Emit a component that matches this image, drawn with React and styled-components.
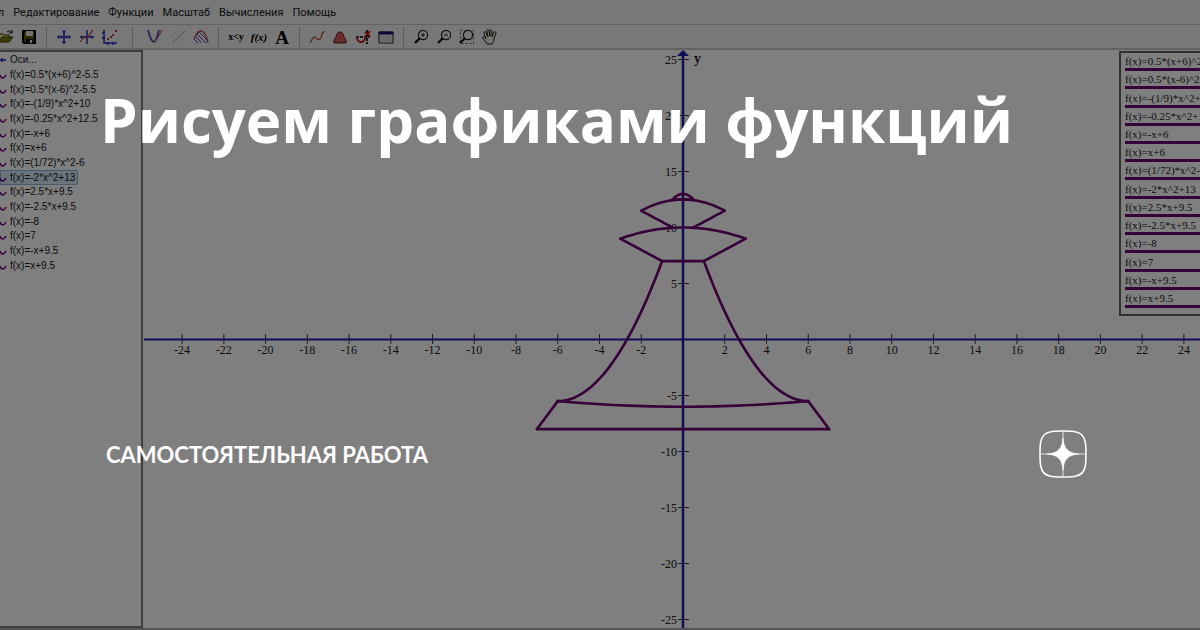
import React from "react";
import styled, { createGlobalStyle } from "styled-components";

const GlobalStyle = createGlobalStyle`
  * {
    box-sizing: border-box;
  }

  body {
    margin: 0;
    background: #808080;
  }
`;

const Cover = styled.main`
  position: relative;
  min-height: 100vh;
  display: flex;
  overflow: hidden;
`;

const AppWindow = styled.div`
  flex: 1;
  min-width: 0;
  display: flex;
  flex-direction: column;
  background: #fff;
  color: #181818;
`;

const MenuBar = styled.nav`
  display: flex;
  gap: 9px;
  height: 24px;
  align-items: center;
  margin-left: -23px;
  background: #f0f0f0;
`;

const MenuItem = styled.button`
  border: 0;
  padding: 0;
  background: none;
  color: #181818;
  font: 11px Roboto, "Noto Sans", sans-serif;
  white-space: nowrap;
`;

const ToolBar = styled.div`
  display: flex;
  align-items: center;
  height: 26px;
  margin-left: -2px;
  padding-top: 1px;
  background: #f0f0f0;
  border-top: 1px solid #c4c4c4;
  border-bottom: 2px solid #c4c4c4;
`;

const ToolGroup = styled.div`
  display: flex;
  gap: 7px;
`;

const Separator = styled.span`
  width: 1px;
  height: 20px;
  margin: 0 ${(p) => (p.$wide ? 14 : 9)}px;
  background: #b8b8b8;
`;

const ToolButton = styled.button`
  width: 16px;
  height: 16px;
  padding: 0;
  border: 0;
  background: none;
  display: flex;

  svg {
    width: 16px;
    height: 16px;
    fill: none;
  }
`;

const Workspace = styled.div`
  flex: 1;
  display: flex;
  min-height: 0;
  border-bottom: 2px solid #a8a8a8;
`;

const Sidebar = styled.aside`
  flex: 0 0 143px;
  border: 2px solid #7c7c7c;
  border-left: 0;
`;

const FunctionList = styled.ul`
  display: grid;
  grid-auto-rows: 1fr;
  height: 221px;
  margin: 0;
  padding: 1px 0 0;
  list-style: none;
`;

const FunctionItem = styled.li`
  display: flex;
  align-items: center;
  justify-self: start;
  gap: 3px;
  padding-right: 3px;
  font: 10px/12px "Liberation Sans", Arial, sans-serif;
  white-space: nowrap;
  border-radius: 0 3px 3px 0;
  background: ${(p) => (p.$selected ? "#d2e8fa" : "none")};
  box-shadow: ${(p) => (p.$selected ? "inset 0 0 0 1px #8ab4d8" : "none")};

  svg {
    width: 7px;
    height: 8px;
    fill: none;
  }
`;

const PlotArea = styled.section`
  flex: 1;
  min-width: 0;
  position: relative;
  display: flex;
`;

const PlotSvg = styled.svg`
  width: 100%;
  height: 578px;
  font: 12px "Liberation Serif", "Times New Roman", serif;
`;

const Legend = styled.ul`
  position: absolute;
  top: 1px;
  right: 0;
  width: 81px;
  display: grid;
  grid-auto-rows: 1fr;
  height: 265px;
  margin: 0;
  padding: 0 0 6px 4px;
  list-style: none;
  overflow: hidden;
  background: #fff;
  border: 2px solid #606060;
  border-right: 0;
`;

const LegendItem = styled.li`
  display: flex;
  align-items: flex-end;
  font: 11px/14px "Liberation Serif", "Times New Roman", serif;
  white-space: nowrap;
  border-bottom: 3px solid #6c0070;
`;

const Shade = styled.div`
  position: absolute;
  inset: 0;
  display: flex;
  flex-direction: column;
  justify-content: space-between;
  padding: 76px 113px 152px 100px;
  background: rgba(0, 0, 0, 0.5);
  color: #fff;
`;

const Title = styled.h1`
  margin: 0;
  font: 700 60px/88px "Open Sans", "Noto Sans", sans-serif;
  white-space: nowrap;
`;

const Footer = styled.footer`
  display: flex;
  align-items: center;
  justify-content: space-between;
  padding-left: 6px;
`;

const Channel = styled.span`
  padding-top: 2px;
  font: 700 22px/32px Lato, "Noto Sans", sans-serif;
  white-space: nowrap;
`;

const LogoSvg = styled.svg`
  width: 48px;
  height: 48px;
`;

const menu = ["Файл", "Редактирование", "Функции", "Масштаб", "Вычисления", "Помощь"];

const functions = [
  "f(x)=0.5*(x+6)^2-5.5",
  "f(x)=0.5*(x-6)^2-5.5",
  "f(x)=-(1/9)*x^2+10",
  "f(x)=-0.25*x^2+12.5",
  "f(x)=-x+6",
  "f(x)=x+6",
  "f(x)=(1/72)*x^2-6",
  "f(x)=-2*x^2+13",
  "f(x)=2.5*x+9.5",
  "f(x)=-2.5*x+9.5",
  "f(x)=-8",
  "f(x)=7",
  "f(x)=-x+9.5",
  "f(x)=x+9.5",
];

const SELECTED = 7;

const icons = {
  open: (
    <>
      <path d="M1 13V5h4l1 1h5v2" stroke="#333300" fill="#e8e070" />
      <path d="M1 13l3-5h11l-4 5z" stroke="#333300" fill="#808000" />
      <path d="M9 3c2-2 4-1 5 1M14 1v3h-3" stroke="#000" />
    </>
  ),
  save: (
    <>
      <path d="M2 2h12v12H3l-1-1z" fill="#555500" stroke="#000" strokeWidth="2" />
      <path d="M5 2h7v5H5z" fill="#e8e8e8" />
      <path d="M5 10h7v4H5z" fill="#111" />
      <path d="M9 11h2v3H9z" fill="#eee" />
    </>
  ),
  axes: (
    <>
      <path d="M1 8h14M8 1v14" stroke="#2828c0" strokeWidth="1.6" />
      <path d="M3 6v4M5.5 6.5v3M10.5 6.5v3M13 6v4M6 3h4M6 13h4" stroke="#2828c0" />
    </>
  ),
  curve: (
    <>
      <path d="M1 8h14M8 1v14" stroke="#2828c0" strokeWidth="1.5" />
      <path d="M3 6.5v3M13 6.5v3" stroke="#2828c0" />
      <path d="M1 13c3-4 4-5 6-4s3-4 7-8" stroke="#b83838" strokeWidth="1.2" />
    </>
  ),
  points: (
    <>
      <path d="M2 1v13h13M0 4h3M0 9h3M6 13v3M11 13v3" stroke="#2828c0" strokeWidth="1.5" />
      <path d="M5 10h2M8 8h2M10 6h2M13 2h2" stroke="#b83838" strokeWidth="2" />
    </>
  ),
  parabola: (
    <>
      <path d="M1 1c2 8 4 12 6 12s3-5 5-12" stroke="#3838b0" strokeWidth="1.6" />
      <path d="M7 13c3-2 5-7 8-12" stroke="#c05068" strokeWidth="1.2" />
    </>
  ),
  tangent: (
    <>
      <path d="M2 14L15 2" stroke="#a0a0a0" />
      <path d="M2 6l5-4M9 13l5-4" stroke="#bcbcbc" strokeDasharray="2 2" />
    </>
  ),
  area: (
    <>
      <path d="M1 10C4 4 5 2 8 2s6 6 7 12" stroke="#b84858" strokeWidth="1.4" />
      <path d="M1 10l4 4M3 8l6 6M4 5l9 9M6 3l9 9" stroke="#4848b0" />
    </>
  ),
  trend: <path d="M1 14c2-3 3-7 5-6s3 4 5 2 1-5 4-8" stroke="#b83838" strokeWidth="1.2" />,
  integral: <path d="M2 14v-3C5 8 4 3 8 3s3 5 6 8v3z" fill="#d85858" stroke="#501818" />,
  rotate: (
    <>
      <path d="M1 8h14M12 1v14" stroke="#000" strokeWidth="1.7" strokeDasharray="3 1" />
      <path d="M2 8c0 6 7 7 8 1M10 8l5-6M10 3l5 4" stroke="#c01818" strokeWidth="1.8" />
    </>
  ),
  table: (
    <>
      <path d="M1 3h14v11H1z" fill="#e8e8e8" stroke="#202020" />
      <path d="M1 3h14v2H1z" fill="#101080" stroke="#181860" />
      <path d="M2 8h12M2 11h12M5 6v8M8 6v8M11 6v8" stroke="#c4c4cc" />
    </>
  ),
  zoomIn: (
    <>
      <circle cx="10" cy="6" r="4.6" stroke="#222" strokeWidth="1.2" />
      <path d="M7 9l-5 5" stroke="#111" strokeWidth="2.4" />
      <path d="M8 6h4M10 4v4" stroke="#111" />
    </>
  ),
  zoomOut: (
    <>
      <circle cx="10" cy="6" r="4.6" stroke="#222" strokeWidth="1.2" />
      <path d="M7 9l-5 5" stroke="#111" strokeWidth="2.4" />
      <path d="M8 6h4" stroke="#111" />
    </>
  ),
  zoomBox: (
    <>
      <path d="M1.5 1.5h13v13h-13z" stroke="#555" strokeDasharray="2 2" />
      <circle cx="9" cy="6" r="4.6" stroke="#222" strokeWidth="1.2" />
      <path d="M6 9l-5 5" stroke="#111" strokeWidth="2.4" />
    </>
  ),
  hand: (
    <path
      d="M5 15c-1-3-5-5-4-7 1-1 2 0 3 2L2 4c0-2 2-2 2 0l2 4-1-6c0-2 2-2 2 0l1 5V2c0-2 2-1 2 0v6l2-5c1-1 2 0 2 1l-2 6c0 2-1 3-2 5z"
      fill="#f4ecd8"
      stroke="#222"
    />
  ),
};

// glyph buttons are lettered rather than drawn
const glyphs = {
  less: { text: "x<y", size: 10, y: 11 },
  fx: { text: "f(x)", size: 11, italic: true, y: 12 },
  text: { text: "A", size: 19, y: 15 },
};

const toolGroups = [
  [["open", "Открыть"], ["save", "Сохранить"]],
  [["axes", "Оси"], ["curve", "График"], ["points", "Точки"]],
  [["parabola", "Функция"], ["tangent", "Касательная"], ["area", "Штриховка"]],
  [["less", "Неравенство"], ["fx", "Выражение"], ["text", "Надпись"]],
  [["trend", "Линия тренда"], ["integral", "Интеграл"], ["rotate", "Вычислить"], ["table", "Таблица"]],
  [["zoomIn", "Увеличить"], ["zoomOut", "Уменьшить"], ["zoomBox", "Область"], ["hand", "Переместить"]],
];

// screen position of a point given in graph units
const ORIGIN = { x: 540, y: 289 };
const px = (x) => ORIGIN.x + x * 20.87;
const py = (y) => ORIGIN.y + 0.5 - y * 11.2;

const curves = [
  [(x) => 0.5 * (x + 6) ** 2 - 5.5, -6, -1],
  [(x) => 0.5 * (x - 6) ** 2 - 5.5, 1, 6],
  [(x) => -(x ** 2) / 9 + 10, -3, 3],
  [(x) => -0.25 * x ** 2 + 12.5, -2, 2],
  [(x) => -x + 6, -3, -1],
  [(x) => x + 6, 1, 3],
  [(x) => x ** 2 / 72 - 6, -6, 6],
  [(x) => -2 * x ** 2 + 13, -0.5, 0.5],
  [(x) => 2.5 * x + 9.5, -7, -6],
  [(x) => -2.5 * x + 9.5, 6, 7],
  [() => -8, -7, 7],
  [() => 7, -1, 1],
  [(x) => -x + 9.5, -2, -0.5],
  [(x) => x + 9.5, 0.5, 2],
  [() => 12.5, -0.5, 0.5],
];

function toPoints([fn, from, to]) {
  const steps = 32;
  return Array.from({ length: steps + 1 }, (_, i) => {
    const x = from + ((to - from) * i) / steps;
    return `${px(x)},${py(fn(x))}`;
  }).join(" ");
}

const xTicks = Array.from({ length: 25 }, (_, i) => (i - 12) * 2).filter((n) => n !== 0);
const yTicks = [25, 20, 15, 10, 5, -5, -10, -15, -20, -25];

function ToolIcon({ name }) {
  const glyph = glyphs[name];
  return (
    <svg viewBox="0 0 16 16" overflow="visible">
      {glyph ? (
        <text
          x="8"
          y={glyph.y}
          textAnchor="middle"
          fill="#000"
          fontFamily="Liberation Serif, serif"
          fontSize={glyph.size}
          fontWeight="700"
          fontStyle={glyph.italic ? "italic" : "normal"}
        >
          {glyph.text}
        </text>
      ) : (
        icons[name]
      )}
    </svg>
  );
}

function Tools() {
  return (
    <ToolBar>
      {toolGroups.map((group, i) => (
        <React.Fragment key={i}>
          {i > 0 && <Separator $wide={i === 2} />}
          <ToolGroup>
            {group.map(([name, label]) => (
              <ToolButton key={name} aria-label={label}>
                <ToolIcon name={name} />
              </ToolButton>
            ))}
          </ToolGroup>
        </React.Fragment>
      ))}
    </ToolBar>
  );
}

function Plot() {
  return (
    <PlotSvg viewBox="0 0 1057 578" preserveAspectRatio="xMidYMin slice" fill="#181818">
      <g stroke="#1c1cac" strokeWidth="2">
        <path d={`M1 ${ORIGIN.y + 0.5}H1057`} />
        <path d={`M${ORIGIN.x} 4V578`} strokeWidth="2.5" />
        <path d={`M${ORIGIN.x} 0l6 6h-12z`} fill="#1c1cac" stroke="none" />
      </g>
      {xTicks.map((n) => (
        <g key={n}>
          <path d={`M${px(n)} ${ORIGIN.y - 5}v10`} stroke="#38385c" />
          <text x={px(n)} y={ORIGIN.y + 15} textAnchor="middle">{n}</text>
        </g>
      ))}
      {yTicks.map((n) => (
        <g key={n}>
          <path d={`M${ORIGIN.x - 5} ${py(n)}h11`} stroke="#38385c" />
          <text x={ORIGIN.x - 6} y={py(n) + 4} textAnchor="end">{n}</text>
        </g>
      ))}
      <text x="551" y="13" fontSize="14" fontWeight="700">y</text>
      <g fill="none" stroke="#6c0070" strokeWidth="2.6" strokeLinecap="round">
        {curves.map((curve, i) => (
          <polyline key={i} points={toPoints(curve)} />
        ))}
      </g>
    </PlotSvg>
  );
}

function ZenLogo() {
  return (
    <LogoSvg viewBox="0 0 48 48" role="img" aria-label="Дзен">
      <path
        d="M24 1C29 1 34 1 37 2 42 3 45 6 46 11 47 14 47 19 47 24S47 34 46 37C45 42 42 45 37 46 34 47 29 47 24 47S14 47 11 46C6 45 3 42 2 37 1 34 1 29 1 24S1 14 2 11C3 6 6 3 11 2 14 1 19 1 24 1z"
        fill="none"
        stroke="#fff"
        strokeWidth="1.6"
      />
      <path d="M24 2v44M2 24h44" stroke="#fff" strokeOpacity="0.5" strokeWidth="1.6" />
      <path d="M24 8C25 19 29 23 40 24 29 25 25 29 24 40 23 29 19 25 8 24 19 23 23 19 24 8z" fill="#fff" stroke="#fff" strokeWidth="0.6" />
    </LogoSvg>
  );
}

function App() {
  return (
    <>
      <GlobalStyle />
      <Cover>
        <AppWindow>
          <MenuBar>
            {menu.map((item) => (
              <MenuItem key={item}>{item}</MenuItem>
            ))}
          </MenuBar>
          <Tools />
          <Workspace>
            <Sidebar>
              <FunctionList>
                <FunctionItem>
                  <svg viewBox="0 0 7 8">
                    <path d="M0 4h6M2 2v4" stroke="#2828c0" strokeWidth="1.6" />
                  </svg>
                  Оси...
                </FunctionItem>
                {functions.map((fn, i) => (
                  <FunctionItem key={fn} $selected={i === SELECTED}>
                    <svg viewBox="0 0 7 8">
                      <path d="M0 4c1 4 4 4 6 0" stroke="#6c0070" strokeWidth="1.5" />
                    </svg>
                    {fn}
                  </FunctionItem>
                ))}
              </FunctionList>
            </Sidebar>
            <PlotArea>
              <Plot />
              <Legend>
                {functions.map((fn) => (
                  <LegendItem key={fn}>{fn}</LegendItem>
                ))}
              </Legend>
            </PlotArea>
          </Workspace>
        </AppWindow>
        <Shade>
          <Title>Рисуем графиками функций</Title>
          <Footer>
            <Channel>САМОСТОЯТЕЛЬНАЯ РАБОТА</Channel>
            <ZenLogo />
          </Footer>
        </Shade>
      </Cover>
    </>
  );
}

export default App;
